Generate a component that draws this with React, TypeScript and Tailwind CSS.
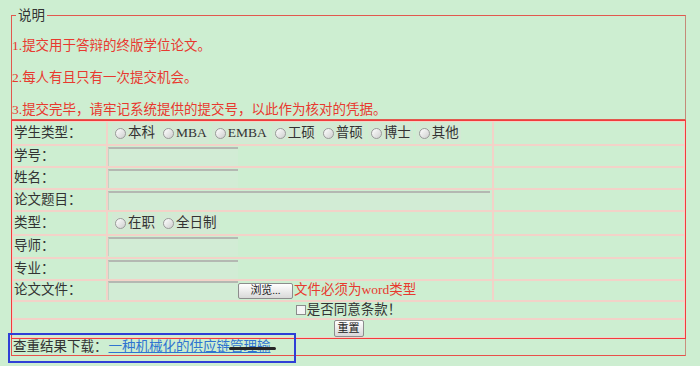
import { ReactNode } from "react"

const studentTypes = ["本科", "MBA", "EMBA", "工硕", "普硕", "博士", "其他"]

function Radio({ label }: { label: string }) {
  return (
    <span className="inline-flex h-[20px] items-center gap-[2px] bg-[#d3e9d4] pl-[3px] pr-[2px]">
      <span className="h-[11px] w-[11px] rounded-full border border-[#9a9a9a] bg-gradient-to-br from-white to-[#cfcfcf]" />
      <span>{label}</span>
    </span>
  )
}

function TextBox({ width }: { width: string }) {
  return (
    <input
      className={`${width} h-[19px] border-t-2 border-l border-t-[#b4b8b2] border-l-[#c3d3c4] bg-[#d2ecd5] outline-none`}
    />
  )
}

function Row({ label, h, children }: { label: string; h: string; children?: ReactNode }) {
  return (
    <>
      <div className={`${h} flex items-center border border-[#f3d2c8] pl-[1px]`}>{label}</div>
      <div className={`${h} flex items-center border border-[#f3d2c8]`}>{children}</div>
      <div className={`${h} border border-[#f3d2c8]`} />
    </>
  )
}

export default function App() {
  return (
    <div
      className="min-h-screen bg-[#cdeed1] pt-[15px] text-[13.5px] text-[#333]"
      style={{ fontFamily: '"Liberation Serif", "Noto Sans CJK SC", serif' }}
    >
      <div className="ml-[11px] w-[675px]">
        {/* 说明 box, legend sits over the top border */}
        <div className="relative border border-[#e2584e] border-r-[#c48a78]">
          <span className="absolute -top-[10px] left-[4px] bg-[#cdeed1] px-[2px] leading-[19px]">说明</span>
          <div className="flex flex-col gap-[13px] pt-[20px] leading-[19px] text-[#e8392f]">
            <p>1.提交用于答辩的终版学位论文。</p>
            <p>2.每人有且只有一次提交机会。</p>
            <p>3.提交完毕，请牢记系统提供的提交号，以此作为核对的凭据。</p>
          </div>
        </div>

        <div className="grid grid-cols-[95px_386px_192px] border border-[#f23c3c]">
          <Row label="学生类型：" h="h-[24px]">
            <div className="flex items-center gap-[3px] pl-[4px]">
              {studentTypes.map((t) => (
                <Radio key={t} label={t} />
              ))}
            </div>
          </Row>
          <Row label="学号：" h="h-[22px]">
            <TextBox width="w-[130px]" />
          </Row>
          <Row label="姓名：" h="h-[22px]">
            <TextBox width="w-[130px]" />
          </Row>
          <Row label="论文题目：" h="h-[22px]">
            <TextBox width="w-[382px]" />
          </Row>
          <Row label="类型：" h="h-[24px]">
            <div className="flex items-center gap-[3px] pl-[4px]">
              <Radio label="在职" />
              <Radio label="全日制" />
            </div>
          </Row>
          <Row label="导师：" h="h-[23px]">
            <TextBox width="w-[130px]" />
          </Row>
          <Row label="专业：" h="h-[22px]">
            <TextBox width="w-[130px]" />
          </Row>
          <Row label="论文文件：" h="h-[21px]">
            <TextBox width="w-[130px]" />
            <button className="h-[16px] w-[55px] rounded-[2px] border border-[#8c8c8c] bg-gradient-to-b from-white to-[#d9d9d9] text-[11px] leading-none text-[#222]">
              浏览...
            </button>
            <span className="ml-[1px] text-[#e8392f]">文件必须为word类型</span>
          </Row>
          <div className="col-span-3 flex h-[18px] items-center justify-center border border-[#f3d2c8]">
            <span className="mr-[1px] h-[10px] w-[10px] border border-[#8c8c8c] bg-[#f4f4f4]" />
            <span>是否同意条款！</span>
          </div>
          <div className="col-span-3 flex h-[19px] items-center justify-center border border-[#f3d2c8]">
            <button className="h-[17px] w-[30px] rounded-[2px] border border-[#8c8c8c] bg-gradient-to-b from-white to-[#d9d9d9] text-[11px] leading-none text-[#222]">
              重置
            </button>
          </div>
        </div>

        <div className="relative flex h-[17px] items-center border-x border-b border-[#e8504a] border-r-[#c8907e] pl-[1px] leading-[16px]">
          <span>查重结果下载：</span>
          <a className="ml-[1px] text-[#2f74d0] underline">一种机械化的供应链管理输</a>
          <span className="absolute left-[217px] top-[8px] h-[3px] w-[47px] rounded-full bg-[#262626] blur-[0.6px]" />
          <span className="absolute -left-[4px] -top-[6px] h-[30px] w-[288px] border-2 border-[#2f3fd6]" />
        </div>
      </div>
    </div>
  )
}
